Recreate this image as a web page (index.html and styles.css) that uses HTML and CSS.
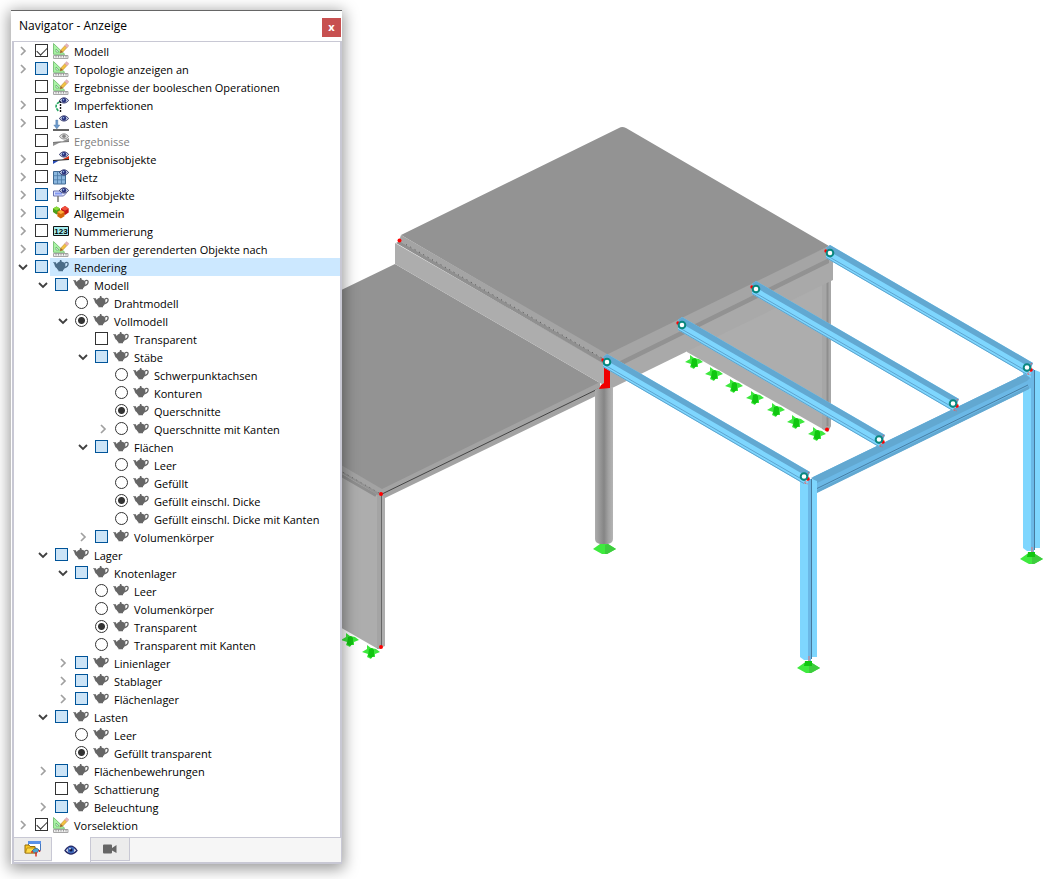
FILE: index.html
```html
<!DOCTYPE html>
<html lang="de">
<head>
    <meta charset="UTF-8">
    <meta name="viewport" content="width=device-width, initial-scale=1.0">
    <title>Navigator - Anzeige</title>
    <link rel="stylesheet" href="styles.css">
</head>
<body>
    <!-- Icon set -->
    <svg class="sprite" aria-hidden="true">
        <symbol id="i-closed" viewBox="0 0 10 10"><path d="M3 1l4 4-4 4" fill="none" stroke="#a0a0a0" stroke-width="1.7"/></symbol>
        <symbol id="i-open" viewBox="0 0 10 10"><path d="M1 3l4 4 4-4" fill="none" stroke="#404040" stroke-width="1.8"/></symbol>
        <symbol id="i-pot" viewBox="0 0 16 16">
            <path d="M7 1h1.300l.5 1.700c1.800.2 2.800.9 3.300 1.800.4 1 .4 2 .2 3-.3 1.700-1.200 3-2.300 3.800v1H5.400v-1C4.600 10.800 4 10 3.600 9 2.200 8.400 1.800 6.600 1.400 5.400 1.200 4.500.7 4.200 0 3.800l.3-.6h2.600c.3 1 .6 1.500 1 1.700.5-1.300 1.400-2 2.700-2.200z" fill="currentColor"/>
            <path d="M11.800 4.300c1.300-1.300 3.100-1.100 3.300.3.200 1.700-1.300 3.300-3.300 4" fill="none" stroke="currentColor" stroke-width="1.300"/>
        </symbol>
        <symbol id="i-eye" viewBox="0 0 16 16">
            <path d="M6.500 3.500c2-3.500 7-3.500 9 0-2 3.300-7 3.300-9 0z" fill="#c3cbe2" stroke="#252b62" stroke-width="1"/>
            <circle cx="11" cy="3.200" r="2.200" fill="#27317c"/><circle cx="10.500" cy="2.700" r=".8" fill="#9fc3ee"/>
        </symbol>
        <symbol id="i-ruler" viewBox="0 0 16 16">
            <path d="M.5.500v10.800h11.200z" fill="#a9f3a4" stroke="#7fc47d" stroke-width="1"/>
            <path d="M3 6v3h3.200z" fill="#fff" stroke="#62ad69" stroke-width=".8"/>
            <path d="M.5 12.500h14.500v3H.5z" fill="#eee" stroke="#a6a6a6"/>
            <path d="M3 12.500v2M5.500 12.500v2M8 12.500v2M10.500 12.500v2M13 12.500v2" stroke="#888" stroke-width=".8"/>
            <path d="M7 10l.8-3L12 2.500l2 2-4.200 4.500z" fill="#f3c240" stroke="#bb8838" stroke-width=".6"/>
            <path d="M7 10l.8-3 2 2z" fill="#94653a"/>
            <path d="M11.800 2.500L13.500.6 16 2.700l-2 2z" fill="#e9b4ba" stroke="#c59ba6" stroke-width=".4"/>
        </symbol>
        <symbol id="i-imp" viewBox="0 0 16 16">
            <path d="M6.500 5C2 7 2 11 6 14.500" fill="none" stroke="#21a45d" stroke-width="1.600" stroke-dasharray="3 1"/>
            <path d="M7.500 4v11.500" stroke="#111" stroke-width="1.400" stroke-dasharray="2 1"/><path d="M6 4.500h3" stroke="#222"/>
            <use href="#i-eye"/>
        </symbol>
        <symbol id="i-load" viewBox="0 0 16 16">
            <path d="M2.800 5h2v5h2l-3 4-3-4h2z" fill="#6b99cc" stroke="#49759f" stroke-width=".4"/>
            <path d="M0 15h16" stroke="#222" stroke-width="1.400"/><use href="#i-eye"/>
        </symbol>
        <symbol id="i-resgray" viewBox="0 0 16 16">
            <path d="M0 9l9-.5-9 4.500zM9 8.500L16 5v4z" fill="#929292"/><path d="M0 9.500l16-1" stroke="#777"/>
            <path d="M6.500 3.500c2-3.500 7-3.500 9 0-2 3.300-7 3.300-9 0z" fill="#ddd" stroke="#858585"/><circle cx="11" cy="3.200" r="1.800" fill="#858585"/>
        </symbol>
        <symbol id="i-rescolor" viewBox="0 0 16 16">
            <path d="M0 9.500h6L0 13z" fill="#274bb8"/><path d="M9 8.500L16 5v4z" fill="#d83418"/><path d="M0 9.500l16-1" stroke="#222" stroke-width="1.200"/><use href="#i-eye"/>
        </symbol>
        <symbol id="i-mesh" viewBox="0 0 16 16">
            <path d="M.5 2.500h12V15H.5z" fill="#8bb7de" stroke="#416b94"/><path d="M.5 6.700h12M.5 10.800h12M4.500 2.500V15M8.500 2.500V15" stroke="#4a79a5" stroke-width=".8"/><use href="#i-eye"/>
        </symbol>
        <symbol id="i-help" viewBox="0 0 16 16">
            <path d="M.5 4h10l2.500 2.500L10.500 9H.5z" fill="#dce2ff" stroke="#6872b0"/><path d="M2 5.500h7v2H2z" fill="#8198f2"/><path d="M5 9v6" stroke="#777" stroke-width="1.500"/><use href="#i-eye"/>
        </symbol>
        <symbol id="i-cubes" viewBox="0 0 16 16">
            <path d="M0 3.500L3.500 1.500 7 3.500v4L3.500 9.500 0 7z" fill="#4d9e18"/><path d="M0 3.500l3.500-2L7 3.500l-3.500 2z" fill="#8bdb38"/>
            <path d="M8 3.500l4-2.500 3.700 2.500v4L12 10 8 7.500z" fill="#c31616"/><path d="M8 3.500L12 1l3.700 2.500L12 5.700z" fill="#f04f3c"/>
            <path d="M4.300 7l3.500-2 3.700 2v4.300L7.800 13.500l-3.500-2.300z" fill="#d4680b"/><path d="M4.300 7l3.500-2 3.700 2-3.700 2z" fill="#ffad3b"/>
        </symbol>

        <!-- Model parts -->
        <symbol id="m-beam" viewBox="-10 -15 230 145">
            <path d="M-4-5L0-8 203 110 197 122-4 5z" fill="#7ed6fe"/>
            <path d="M-4-5L0-8 203 110 201 115-3-3z" fill="#62a8d1"/>
            <path d="M-4 2L198 119M-4 4.500L197 121.500" fill="none" stroke="#5da3ce" stroke-width="1"/>
            <path d="M202 110l-2 3 2 2-2 4-3 2 4 1" fill="none" stroke="#e55" stroke-width=".8" stroke-dasharray="2 1"/>
            <circle cx="-4" cy="-2" r="1.700" fill="#f00"/><circle cx="201" cy="117" r="1.800" fill="#f00"/>
            <circle r="3.300" fill="#fff" stroke="#09877f" stroke-width="2"/>
            <circle cx="197" cy="114.500" r="3.300" fill="#fff" stroke="#09877f" stroke-width="2"/>
        </symbol>
        <symbol id="m-line" viewBox="-10 -10 20 20">
            <path d="M-9 0L-4-3v-4L0-4 5-3 9 0 4 2v3H1L0 7-4 5-3 2z" fill="#3ce83c"/>
            <path d="M-2-3L1-4 3-2v6L0 6-3 4z" fill="#11c611"/>
        </symbol>
        <symbol id="m-foot" viewBox="-14 -12 28 20">
            <path d="M-11 0L-4-5h8l8 5-9 5h-5z" fill="#3eea3e"/><path d="M1-4l3-1 8 5-9 5H1z" fill="#3dcc3d"/>
        </symbol>
        <symbol id="m-post" viewBox="0 0 18 190">
            <path d="M0 2h8v179H4l-4-3z" fill="#7ed6fe"/><path d="M8 0h3v182H8z" fill="#6bb8e6"/><path d="M11.500 0v180" stroke="#477a9e"/><path d="M12 0l5 2v176h-5z" fill="#7ed6fe"/>
        </symbol>
    </svg>

    <main class="workspace">
        <svg class="model" viewBox="0 0 1043 879" role="img">
            <defs>
                <linearGradient id="pipe"><stop offset="0" stop-color="#adadad"/><stop offset=".5" stop-color="#858585"/><stop offset=".75" stop-color="#a2a2a2"/><stop offset="1" stop-color="#b5b5b5"/></linearGradient>
            </defs>
            <!-- Right wall and upper roof -->
            <path d="M687 352V320L831 270V425l-3 7z" fill="#adadad"/>
            <path d="M822 275h9v151l-3 6-6-3z" fill="#a6a6a6"/><path d="M827.500 280v146" stroke="#8e8e8e" stroke-width="2"/>
            <path d="M607 362L833 252v28L606 391z" fill="#a9a9a9"/>
            <path d="M612 364L829 257v6L612 370z" fill="#929292"/>
            <path d="M604 353L828 246l3 2v9L612 365z" fill="#a5a5a5"/>
            <path d="M401 235L619 128q3-2 7 0L829 246 606 355z" fill="#939393"/>
            <!-- Lower roof and left wall -->
            <path d="M300 443L381 490l4 5v151l-7 3L300 604z" fill="#adadad"/>
            <path d="M377 494h4v155h-4z" fill="#a4a4a4"/><path d="M381.500 494v153" stroke="#666"/>
            <path d="M300 448L378 495l7-3-4-5L300 441z" fill="#939393"/>
            <path d="M300 310L395 264 600 383 382 490 300 443z" fill="#939393"/>
            <path d="M300 441L382 489 600 382v12L385 498l-4-4L300 447z" fill="#a3a3a3"/>
            <path d="M300 451.500l76 44" stroke="#8e8e8e" stroke-width="3"/>
            <path d="M300 447.500l80 46" stroke="#555" stroke-width=".7" stroke-dasharray="1 4"/>
            <path d="M382 494L602 387" stroke="#444" stroke-width="1"/>
            <!-- Step between the roofs -->
            <path d="M395 243L604 363v22l-4-2L395 264z" fill="#adadad"/>
            <path d="M396 243l4-2L606 360v5z" fill="#909090"/>
            <path d="M401 235L607 354v7L399 241z" fill="#a4a4a4"/>
            <path d="M406 244.500L602 358" stroke="#333" stroke-width=".7" stroke-dasharray="1 4"/>
            <path d="M595 390l5-3h13v152q0 4-5 5h-8q-5-1-5-5z" fill="url(#pipe)"/>
            <path d="M604 367h6v21l-11 1 2-4 3-2z" fill="#f00000"/>
            <!-- Frame -->
            <use href="#m-post" x="1023" y="370" width="18" height="190"/>
            <path d="M813 477L1025 374l6 4v10L816 493z" fill="#6bb8e6"/>
            <path d="M811 478L1025 374l5 4-3 3L817 483z" fill="#62a8d1"/>
            <path d="M817 490L1029 386v3L817 493z" fill="#62a8d1"/><path d="M817 488.500L1028 385" stroke="#477fa5"/>
            <path d="M1031 369h3v178h-3z" fill="#6bb8e6"/>
            <use href="#m-post" x="800" y="479" width="18" height="190"/>
            <!-- Line supports -->
            <use href="#m-line" x="684" y="352" width="20" height="20"/>
            <use href="#m-line" x="704" y="364" width="20" height="20"/>
            <use href="#m-line" x="724" y="376" width="20" height="20"/>
            <use href="#m-line" x="745" y="388" width="20" height="20"/>
            <use href="#m-line" x="766" y="400" width="20" height="20"/>
            <use href="#m-line" x="786" y="412" width="20" height="20"/>
            <use href="#m-line" x="807" y="424" width="20" height="20"/>
            <use href="#m-line" x="340" y="630" width="20" height="20"/>
            <use href="#m-line" x="361" y="642" width="20" height="20"/>
            <!-- Rafters -->
            <use href="#m-beam" x="820" y="238" width="230" height="145"/>
            <use href="#m-beam" x="746" y="274" width="230" height="145"/>
            <use href="#m-beam" x="672" y="310" width="230" height="145"/>
            <use href="#m-beam" x="597" y="347" width="230" height="145"/>
            <!-- Column supports -->
            <use href="#m-foot" x="590" y="537" width="28" height="20"/>
            <use href="#m-foot" x="794" y="656" width="28" height="20"/>
            <use href="#m-foot" x="1017" y="547" width="28" height="20"/>
            <path d="M805 661h7v5h-8zM1028 552h7v5h-8z" fill="#11c611"/>
            <path d="M809 656v5M1032 547v5" stroke="#e77"/>
            <g fill="#f00"><circle cx="399.500" cy="240.500" r="2"/><circle cx="381" cy="494" r="2"/><circle cx="381" cy="647" r="2"/><circle cx="827" cy="429.500" r="2"/></g>
        </svg>

        <section class="navigator">
            <header class="titlebar">
                <h1>Navigator - Anzeige</h1>
                <button type="button" class="close">x</button>
            </header>

            <ul class="tree">
                <li><div class="row"><button type="button" class="toggle"><svg><use href="#i-closed"/></svg></button><label><input type="checkbox" checked><span class="caption"><svg><use href="#i-ruler"/></svg>Modell</span></label></div></li>
                <li><div class="row"><button type="button" class="toggle"><svg><use href="#i-closed"/></svg></button><label><input type="checkbox" class="partial"><span class="caption"><svg><use href="#i-ruler"/></svg>Topologie anzeigen an</span></label></div></li>
                <li><div class="row leaf"><label><input type="checkbox"><span class="caption"><svg><use href="#i-ruler"/></svg>Ergebnisse der booleschen Operationen</span></label></div></li>
                <li><div class="row"><button type="button" class="toggle"><svg><use href="#i-closed"/></svg></button><label><input type="checkbox"><span class="caption"><svg><use href="#i-imp"/></svg>Imperfektionen</span></label></div></li>
                <li><div class="row"><button type="button" class="toggle"><svg><use href="#i-closed"/></svg></button><label><input type="checkbox"><span class="caption"><svg><use href="#i-load"/></svg>Lasten</span></label></div></li>
                <li><div class="row leaf"><label><input type="checkbox"><span class="caption muted"><svg><use href="#i-resgray"/></svg>Ergebnisse</span></label></div></li>
                <li><div class="row"><button type="button" class="toggle"><svg><use href="#i-closed"/></svg></button><label><input type="checkbox"><span class="caption"><svg><use href="#i-rescolor"/></svg>Ergebnisobjekte</span></label></div></li>
                <li><div class="row"><button type="button" class="toggle"><svg><use href="#i-closed"/></svg></button><label><input type="checkbox"><span class="caption"><svg><use href="#i-mesh"/></svg>Netz</span></label></div></li>
                <li><div class="row"><button type="button" class="toggle"><svg><use href="#i-closed"/></svg></button><label><input type="checkbox" class="partial"><span class="caption"><svg><use href="#i-help"/></svg>Hilfsobjekte</span></label></div></li>
                <li><div class="row"><button type="button" class="toggle"><svg><use href="#i-closed"/></svg></button><label><input type="checkbox" class="partial"><span class="caption"><svg><use href="#i-cubes"/></svg>Allgemein</span></label></div></li>
                <li><div class="row"><button type="button" class="toggle"><svg><use href="#i-closed"/></svg></button><label><input type="checkbox"><span class="caption"><svg viewBox="0 0 16 16"><path d="M.5 3.500h15v9H.5z" fill="#a6eef0" stroke="#111"/><text x="8" y="11" text-anchor="middle" class="num">123</text></svg>Nummerierung</span></label></div></li>
                <li><div class="row"><button type="button" class="toggle"><svg><use href="#i-closed"/></svg></button><label><input type="checkbox" class="partial"><span class="caption"><svg><use href="#i-ruler"/></svg>Farben der gerenderten Objekte nach</span></label></div></li>
                <li><div class="row selected"><button type="button" class="toggle"><svg><use href="#i-open"/></svg></button><label><input type="checkbox" class="partial"><span class="caption"><svg class="pot"><use href="#i-pot"/></svg>Rendering</span></label></div>
                    <ul>
                        <li><div class="row"><button type="button" class="toggle"><svg><use href="#i-open"/></svg></button><label><input type="checkbox" class="partial"><span class="caption"><svg class="pot"><use href="#i-pot"/></svg>Modell</span></label></div>
                            <ul>
                                <li><div class="row leaf"><label><input type="radio" name="model"><span class="caption"><svg class="pot"><use href="#i-pot"/></svg>Drahtmodell</span></label></div></li>
                                <li><div class="row"><button type="button" class="toggle"><svg><use href="#i-open"/></svg></button><label><input type="radio" name="model" checked><span class="caption"><svg class="pot"><use href="#i-pot"/></svg>Vollmodell</span></label></div>
                                    <ul>
                                        <li><div class="row leaf"><label><input type="checkbox"><span class="caption"><svg class="pot"><use href="#i-pot"/></svg>Transparent</span></label></div></li>
                                        <li><div class="row"><button type="button" class="toggle"><svg><use href="#i-open"/></svg></button><label><input type="checkbox" class="partial"><span class="caption"><svg class="pot"><use href="#i-pot"/></svg>Stäbe</span></label></div>
                                            <ul>
                                                <li><div class="row leaf"><label><input type="radio" name="members"><span class="caption"><svg class="pot"><use href="#i-pot"/></svg>Schwerpunktachsen</span></label></div></li>
                                                <li><div class="row leaf"><label><input type="radio" name="members"><span class="caption"><svg class="pot"><use href="#i-pot"/></svg>Konturen</span></label></div></li>
                                                <li><div class="row leaf"><label><input type="radio" name="members" checked><span class="caption"><svg class="pot"><use href="#i-pot"/></svg>Querschnitte</span></label></div></li>
                                                <li><div class="row"><button type="button" class="toggle"><svg><use href="#i-closed"/></svg></button><label><input type="radio" name="members"><span class="caption"><svg class="pot"><use href="#i-pot"/></svg>Querschnitte mit Kanten</span></label></div></li>
                                            </ul>
                                        </li>
                                        <li><div class="row"><button type="button" class="toggle"><svg><use href="#i-open"/></svg></button><label><input type="checkbox" class="partial"><span class="caption"><svg class="pot"><use href="#i-pot"/></svg>Flächen</span></label></div>
                                            <ul>
                                                <li><div class="row leaf"><label><input type="radio" name="surfaces"><span class="caption"><svg class="pot"><use href="#i-pot"/></svg>Leer</span></label></div></li>
                                                <li><div class="row leaf"><label><input type="radio" name="surfaces"><span class="caption"><svg class="pot"><use href="#i-pot"/></svg>Gefüllt</span></label></div></li>
                                                <li><div class="row leaf"><label><input type="radio" name="surfaces" checked><span class="caption"><svg class="pot"><use href="#i-pot"/></svg>Gefüllt einschl. Dicke</span></label></div></li>
                                                <li><div class="row leaf"><label><input type="radio" name="surfaces"><span class="caption"><svg class="pot"><use href="#i-pot"/></svg>Gefüllt einschl. Dicke mit Kanten</span></label></div></li>
                                            </ul>
                                        </li>
                                        <li><div class="row"><button type="button" class="toggle"><svg><use href="#i-closed"/></svg></button><label><input type="checkbox" class="partial"><span class="caption"><svg class="pot"><use href="#i-pot"/></svg>Volumenkörper</span></label></div></li>
                                    </ul>
                                </li>
                            </ul>
                        </li>
                        <li><div class="row"><button type="button" class="toggle"><svg><use href="#i-open"/></svg></button><label><input type="checkbox" class="partial"><span class="caption"><svg class="pot"><use href="#i-pot"/></svg>Lager</span></label></div>
                            <ul>
                                <li><div class="row"><button type="button" class="toggle"><svg><use href="#i-open"/></svg></button><label><input type="checkbox" class="partial"><span class="caption"><svg class="pot"><use href="#i-pot"/></svg>Knotenlager</span></label></div>
                                    <ul>
                                        <li><div class="row leaf"><label><input type="radio" name="nodal"><span class="caption"><svg class="pot"><use href="#i-pot"/></svg>Leer</span></label></div></li>
                                        <li><div class="row leaf"><label><input type="radio" name="nodal"><span class="caption"><svg class="pot"><use href="#i-pot"/></svg>Volumenkörper</span></label></div></li>
                                        <li><div class="row leaf"><label><input type="radio" name="nodal" checked><span class="caption"><svg class="pot"><use href="#i-pot"/></svg>Transparent</span></label></div></li>
                                        <li><div class="row leaf"><label><input type="radio" name="nodal"><span class="caption"><svg class="pot"><use href="#i-pot"/></svg>Transparent mit Kanten</span></label></div></li>
                                    </ul>
                                </li>
                                <li><div class="row"><button type="button" class="toggle"><svg><use href="#i-closed"/></svg></button><label><input type="checkbox" class="partial"><span class="caption"><svg class="pot"><use href="#i-pot"/></svg>Linienlager</span></label></div></li>
                                <li><div class="row"><button type="button" class="toggle"><svg><use href="#i-closed"/></svg></button><label><input type="checkbox" class="partial"><span class="caption"><svg class="pot"><use href="#i-pot"/></svg>Stablager</span></label></div></li>
                                <li><div class="row"><button type="button" class="toggle"><svg><use href="#i-closed"/></svg></button><label><input type="checkbox" class="partial"><span class="caption"><svg class="pot"><use href="#i-pot"/></svg>Flächenlager</span></label></div></li>
                            </ul>
                        </li>
                        <li><div class="row"><button type="button" class="toggle"><svg><use href="#i-open"/></svg></button><label><input type="checkbox" class="partial"><span class="caption"><svg class="pot"><use href="#i-pot"/></svg>Lasten</span></label></div>
                            <ul>
                                <li><div class="row leaf"><label><input type="radio" name="loads"><span class="caption"><svg class="pot"><use href="#i-pot"/></svg>Leer</span></label></div></li>
                                <li><div class="row leaf"><label><input type="radio" name="loads" checked><span class="caption"><svg class="pot"><use href="#i-pot"/></svg>Gefüllt transparent</span></label></div></li>
                            </ul>
                        </li>
                        <li><div class="row"><button type="button" class="toggle"><svg><use href="#i-closed"/></svg></button><label><input type="checkbox" class="partial"><span class="caption"><svg class="pot"><use href="#i-pot"/></svg>Flächenbewehrungen</span></label></div></li>
                        <li><div class="row leaf"><label><input type="checkbox"><span class="caption"><svg class="pot"><use href="#i-pot"/></svg>Schattierung</span></label></div></li>
                        <li><div class="row"><button type="button" class="toggle"><svg><use href="#i-closed"/></svg></button><label><input type="checkbox" class="partial"><span class="caption"><svg class="pot"><use href="#i-pot"/></svg>Beleuchtung</span></label></div></li>
                    </ul>
                </li>
                <li><div class="row"><button type="button" class="toggle"><svg><use href="#i-closed"/></svg></button><label><input type="checkbox" checked><span class="caption"><svg><use href="#i-ruler"/></svg>Vorselektion</span></label></div></li>
            </ul>

            <nav class="tabs">
                <button type="button" class="tab">
                    <svg viewBox="0 0 18 18"><path d="M4.500 1.500h12v9h-12z" fill="#fff" stroke="#4477bd"/><path d="M4 1h13v3H4z" fill="#5a91e8"/><path d="M1 5h4l1 1.500h5V13H1z" fill="#f7c51e" stroke="#98700c"/><path d="M3 8h9l-2 5H1.500z" fill="#ffda47" stroke="#98700c" stroke-width=".6"/><path d="M8 11q4-5 7-1l-3 4z" fill="#4da4d4" stroke="#2d5880" stroke-width=".7"/><path d="M12 12v4.500M15.500 10v2M8 11v2" stroke="#d93620" stroke-width="1.500"/></svg>
                </button>
                <button type="button" class="tab active">
                    <svg viewBox="0 0 18 18"><path d="M3 9.500q6-8.500 12 0-6 7-12 0z" fill="#e7ebf7" stroke="#252967" stroke-width="1.300"/><circle cx="9" cy="9" r="3.300" fill="#3c69bd"/><circle cx="9" cy="9" r="1.600" fill="#111844"/><circle cx="8" cy="7.700" r=".8" fill="#fff"/></svg>
                </button>
                <button type="button" class="tab">
                    <svg viewBox="0 0 18 18"><path d="M3 4.500h7q1 0 1 1V8l4.500-3v8L11 10.500v2q0 1-1 1H3q-1 0-1-1v-7q0-1 1-1z" fill="#666"/></svg>
                </button>
            </nav>
        </section>
    </main>
</body>
</html>
```

FILE: styles.css
```css
* {
    box-sizing: border-box;
}
body {
    margin: 0;
    background: #fff;
    color: #000;
    font-family: "Open Sans", "Noto Sans", sans-serif;
    font-size: 11px;
}
.sprite {
    position: absolute;
    width: 0;
    height: 0;
}
.workspace {
    position: relative;
    min-height: 100vh;
    overflow: hidden;
}
.model {
    display: block;
    width: 100%;
    height: auto;
}

/* Floating window */
.navigator {
    position: absolute;
    top: 10px;
    left: 11px;
    width: 331px;
    padding-left: 1px;
    background: #fff;
    border-top: 1px solid #666;
    box-shadow: 0 3px 14px 2px rgba(0, 0, 0, 0.4);
}
.titlebar {
    display: flex;
    align-items: center;
    justify-content: space-between;
    height: 30px;
    padding: 0 1px 0 7px;
}
.titlebar h1 {
    margin: 0;
    padding-bottom: 2px;
    font-size: 12px;
    font-weight: normal;
}
button {
    margin: 0;
    padding: 0;
    border: none;
    background: none;
    font-family: inherit;
}
.close {
    width: 19px;
    height: 19px;
    margin-top: 3px;
    padding-bottom: 2px;
    background: #c75050;
    color: #fff;
    font-size: 11px;
    font-weight: bold;
    line-height: 16px;
}

/* Tree */
ul {
    margin: 0;
    padding: 0;
    list-style: none;
}
.tree {
    padding-bottom: 3px;
    border: 1px solid #c8c8d4;
    border-width: 1px 2px;
}
.tree ul {
    padding-left: 20px;
}
.row {
    display: flex;
    height: 18px;
}
.leaf {
    padding-left: 19px;
}
.toggle {
    width: 19px;
    height: 18px;
}
.toggle svg {
    display: block;
    width: 10px;
    height: 10px;
    margin: 0 4px;
}
.row label {
    display: flex;
    flex: 1;
}
input {
    appearance: none;
    flex: none;
    width: 13px;
    height: 13px;
    margin: 2px 2px 0;
    border: 1px solid #333;
    background: #fff;
}
input[type="radio"] {
    border-radius: 50%;
}
input[type="radio"]:checked {
    background: radial-gradient(circle, #333 3px, #fff 4px);
}
input[type="checkbox"]:checked::before {
    content: "";
    display: block;
    width: 9px;
    height: 5px;
    margin: 2px 1px;
    border: solid #333;
    border-width: 0 0 1px 1px;
    transform: rotate(-45deg);
}
input.partial {
    border-color: #005499;
    background: #cce4f7;
}
.caption {
    display: flex;
    flex: 1;
    align-items: flex-start;
    gap: 5px;
    height: 18px;
    padding-left: 3px;
    line-height: 20px;
    white-space: nowrap;
}
.caption svg {
    flex: none;
    width: 16px;
    height: 16px;
    margin-top: 1px;
}
.pot {
    color: #666;
}
.muted {
    color: #808080;
}
.selected .caption {
    background: #cce8ff;
}
.selected .pot {
    color: #4a6c88;
}
.num {
    font: bold 8px "Liberation Sans", sans-serif;
}

/* Tabs */
.tabs {
    display: flex;
    height: 26px;
    border: 1px solid #c8c8d4;
    border-width: 0 1px 2px 2px;
    background: #f6f6f6;
}
.tab {
    width: 39px;
    height: 23px;
    border: 1px solid #c8c8d4;
    border-width: 0 1px 1px 0;
    background: #ececec;
}
.tab:first-child {
    width: 38px;
}
.tab.active {
    height: 25px;
    margin-top: -1px;
    background: #fff;
    border-bottom: none;
}
.tab svg {
    display: block;
    width: 18px;
    height: 18px;
    margin: 0 auto;
}
```
